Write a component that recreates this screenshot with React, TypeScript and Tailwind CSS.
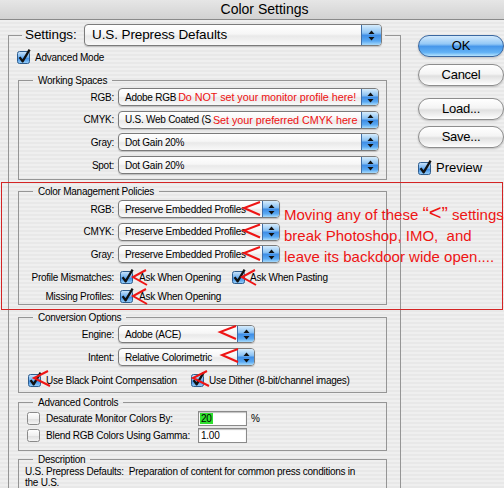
import React from 'react';

type Kids = { children?: React.ReactNode };

function Arrows() {
  return (
    <svg width="7" height="11" viewBox="0 0 7 11">
      <path d="M3.5 0.5 L6.5 4 L0.5 4 Z" fill="#111" />
      <path d="M3.5 10.5 L6.5 7 L0.5 7 Z" fill="#111" />
    </svg>
  );
}

function Popup({
  className,
  text,
  note,
  big,
}: {
  className: string;
  text: string;
  note?: string;
  big?: boolean;
}) {
  return (
    <div
      className={`flex items-stretch rounded-[4px] border border-[#7b7b7b] bg-[linear-gradient(#ffffff,#f6f6f6_45%,#e9e9e9_55%,#f9f9f9)] shadow-[0_1px_1px_rgba(0,0,0,0.18)] ${className}`}
    >
      <div
        className={`flex flex-1 items-center overflow-hidden whitespace-nowrap ${
          big ? 'pl-[7px] text-[13.5px] tracking-[-0.1px]' : 'pl-[6px]'
        }`}
      >
        {text}
        {note && (
          <span className="ml-[2px] text-[10.8px] tracking-[-0.05px] text-[#ee1111]">
            {note}
          </span>
        )}
      </div>
      <div
        className={`flex shrink-0 items-center justify-center rounded-r-[3px] border-l border-[#3f6fa8] bg-[linear-gradient(#d6ecfc,#8cc3f4_40%,#3f8ee6_52%,#5aa9f2_80%,#a8dbfb)] ${
          big ? 'w-[20px]' : 'w-[17px]'
        }`}
      >
        <Arrows />
      </div>
    </div>
  );
}

function Check({ on = true }: { on?: boolean }) {
  return (
    <svg width="13" height="13" viewBox="0 0 13 13" className="shrink-0 overflow-visible">
      <defs>
        <linearGradient id="cbOn" x1="0" y1="0" x2="0" y2="1">
          <stop offset="0" stopColor="#cfe6fb" />
          <stop offset="0.5" stopColor="#6aaef0" />
          <stop offset="0.55" stopColor="#3d8de6" />
          <stop offset="1" stopColor="#9ad2fa" />
        </linearGradient>
        <linearGradient id="cbOff" x1="0" y1="0" x2="0" y2="1">
          <stop offset="0" stopColor="#ffffff" />
          <stop offset="0.5" stopColor="#f0f0f0" />
          <stop offset="0.55" stopColor="#e0e0e0" />
          <stop offset="1" stopColor="#f6f6f6" />
        </linearGradient>
      </defs>
      <rect
        x="0.5"
        y="0.5"
        width="12"
        height="12"
        rx="2"
        fill={on ? 'url(#cbOn)' : 'url(#cbOff)'}
        stroke={on ? '#2f5d8e' : '#8a8a8a'}
      />
      {on && (
        <path
          d="M2.6 6.2 L5.6 10.4 L12.6 -1.4"
          fill="none"
          stroke="#111"
          strokeWidth="2.3"
          strokeLinejoin="round"
        />
      )}
    </svg>
  );
}

function Group({ title, className, children }: Kids & { title: string; className: string }) {
  return (
    <fieldset className={`min-w-0 border border-[#959595] ${className}`}>
      <legend className="ml-[14px] h-[13px] px-[5px] leading-[13px]">{title}</legend>
      {children}
    </fieldset>
  );
}

function Row({ label, children }: Kids & { label: string }) {
  return (
    <div className="flex h-[18px] items-center">
      <span className="w-[95px] text-right">{label}</span>
      <div className="ml-[4px]">{children}</div>
    </div>
  );
}

function CheckRow({ label, className, children }: Kids & { label?: string; className?: string }) {
  return (
    <div className={`flex h-[14px] items-center ${className ?? ''}`}>
      {label !== undefined && <span className="w-[95px] text-right">{label}</span>}
      {children}
    </div>
  );
}

function Button({ label, blue }: { label: string; blue?: boolean }) {
  return (
    <div
      className={`flex h-[22px] w-[86px] items-center justify-center rounded-full border text-[13px] shadow-[0_1px_2px_rgba(0,0,0,0.2)] ${
        blue
          ? 'border-[#3a67a0] bg-[linear-gradient(#d2e9fc,#93c8f6_40%,#4797ea_52%,#63b2f5_82%,#b6e3fd)]'
          : 'border-[#8d8d8d] bg-[linear-gradient(#ffffff,#f4f4f4_45%,#e0e0e0_55%,#f4f4f4_85%,#ffffff)]'
      }`}
    >
      {label}
    </div>
  );
}

const marks: string[] = [
  '260,202 244,208 260,215',
  '260,224.5 244,230.5 260,237.5',
  '260,247 244,253 260,260',
  '146,270 133,277 147,285',
  '146,289 133,296 147,304',
  '255,270 242,277 256,285',
  '236,326 220,332 236,339',
  '238,349 222,355 238,362',
  '48,371 34,378 50,386',
  '207,371 193,378 209,386',
];

export default function App() {
  return (
    <div className="relative h-[488px] w-[504px] overflow-hidden bg-[repeating-linear-gradient(180deg,#efefef_0px,#efefef_2px,#e8e8e8_2px,#e8e8e8_4px)] font-['Liberation_Sans',Arial,sans-serif] text-[10px] tracking-[-0.25px] text-black">
      <div className="flex h-[20px] items-center justify-center border-b border-[#8a8a8a] bg-[linear-gradient(#e6e6e6,#d2d2d2)] pl-[25px] text-[14px] tracking-normal">
        Color Settings
      </div>

      <div className="flex">
        <div className="ml-[8px] w-[409px]">
          <fieldset className="mt-[4px] min-w-0 border border-[#959595] pt-[5px]">
            <legend className="ml-[13px] px-[3px]">
              <div className="flex h-[22px] items-center">
                <span className="w-[59px] text-[13.5px] tracking-[-0.1px]">Settings:</span>
                <Popup big className="h-[22px] w-[298px]" text="U.S. Prepress Defaults" />
              </div>
            </legend>

            <div className="ml-[8px] flex h-[13px] items-center gap-[5px]">
              <Check />
              <span>Advanced Mode</span>
            </div>

            <Group title="Working Spaces" className="mt-[10px] ml-[9px] w-[369px] pt-[1px] pb-[5px]">
              <div className="flex flex-col gap-[4.7px]">
                <Row label="RGB:">
                  <Popup
                    className="h-[18px] w-[261px]"
                    text="Adobe RGB"
                    note="Do NOT set your monitor profile here!"
                  />
                </Row>
                <Row label="CMYK:">
                  <Popup
                    className="h-[18px] w-[261px]"
                    text="U.S. Web Coated (S"
                    note="Set your preferred CMYK here"
                  />
                </Row>
                <Row label="Gray:">
                  <Popup className="h-[18px] w-[261px]" text="Dot Gain 20%" />
                </Row>
                <Row label="Spot:">
                  <Popup className="h-[18px] w-[261px]" text="Dot Gain 20%" />
                </Row>
              </div>
            </Group>

            <Group title="Color Management Policies" className="mt-[5px] ml-[9px] w-[369px] pt-[2px] pb-[1px]">
              <div className="flex flex-col gap-[4.5px]">
                <Row label="RGB:">
                  <Popup className="h-[18px] w-[162px]" text="Preserve Embedded Profiles" />
                </Row>
                <Row label="CMYK:">
                  <Popup className="h-[18px] w-[162px]" text="Preserve Embedded Profiles" />
                </Row>
                <Row label="Gray:">
                  <Popup className="h-[18px] w-[162px]" text="Preserve Embedded Profiles" />
                </Row>
              </div>
              <CheckRow label="Profile Mismatches:" className="mt-[7px]">
                <span className="ml-[6px]">
                  <Check />
                </span>
                <span className="ml-[6px] w-[93px]">Ask When Opening</span>
                <Check />
                <span className="ml-[5px]">Ask When Pasting</span>
              </CheckRow>
              <CheckRow label="Missing Profiles:" className="mt-[5px]">
                <span className="ml-[6px]">
                  <Check />
                </span>
                <span className="ml-[6px]">Ask When Opening</span>
              </CheckRow>
            </Group>

            <Group title="Conversion Options" className="mt-[6px] ml-[9px] w-[369px] pt-[1px] pb-[5px]">
              <div className="flex flex-col gap-[5px]">
                <Row label="Engine:">
                  <Popup className="h-[18px] w-[137px]" text="Adobe (ACE)" />
                </Row>
                <Row label="Intent:">
                  <Popup className="h-[18px] w-[137px]" text="Relative Colorimetric" />
                </Row>
              </div>
              <CheckRow className="mt-[7px] pl-[9px]">
                <Check />
                <span className="ml-[5px] w-[145px]">Use Black Point Compensation</span>
                <Check />
                <span className="ml-[5px]">Use Dither (8-bit/channel images)</span>
              </CheckRow>
            </Group>

            <Group title="Advanced Controls" className="mt-[3px] ml-[9px] w-[369px] pt-[2px] pb-[7px]">
              <div className="flex h-[15px] items-center pl-[8px]">
                <Check on={false} />
                <span className="ml-[6px] w-[152px]">Desaturate Monitor Colors By:</span>
                <div className="flex h-[15px] w-[49px] items-center border border-[#8a8a8a] bg-white pl-[1px] shadow-[inset_0_1px_1px_rgba(0,0,0,0.25)]">
                  <span className="bg-[#2fe12f] px-[1px] leading-[11px]">20</span>
                </div>
                <span className="ml-[4px]">%</span>
              </div>
              <div className="mt-[2px] flex h-[15px] items-center pl-[8px]">
                <Check on={false} />
                <span className="ml-[6px] w-[152px]">Blend RGB Colors Using Gamma:</span>
                <div className="flex h-[15px] w-[49px] items-center border border-[#8a8a8a] bg-white pl-[2px] shadow-[inset_0_1px_1px_rgba(0,0,0,0.25)]">
                  1.00
                </div>
              </div>
            </Group>

            <Group title="Description" className="mt-[2px] ml-[9px] w-[369px] pt-[0px] pb-[30px]">
              <div className="pl-[6px] leading-[12px] whitespace-pre">
                <div>U.S. Prepress Defaults:  Preparation of content for common press conditions in</div>
                <div className="-mt-[1px]">the U.S.</div>
              </div>
            </Group>
          </fieldset>
        </div>

        <div className="ml-[17px] flex flex-col pt-[15px]">
          <Button label="OK" blue />
          <div className="mt-[6.5px]">
            <Button label="Cancel" />
          </div>
          <div className="mt-[12.5px]">
            <Button label="Load..." />
          </div>
          <div className="mt-[6px]">
            <Button label="Save..." />
          </div>
          <div className="mt-[13px] flex h-[14px] items-center gap-[5px] text-[13px] tracking-normal">
            <Check />
            <span>Preview</span>
          </div>
        </div>
      </div>

      <div className="pointer-events-none absolute top-[182px] left-[1px] h-[128px] w-[502px] border border-[#d42424]" />

      <div className="pointer-events-none absolute top-[203px] left-[284px] text-[15px] leading-[21px] tracking-normal whitespace-pre text-[#ee1414]">
        <div>
          Moving any of these <span className="text-[19px]">“</span>
          <span className="text-[22px] leading-[0]">&lt;</span>
          <span className="text-[19px]">”</span> settings
        </div>
        <div>break Photoshop, IMO,  and</div>
        <div>leave its backdoor wide open....</div>
      </div>

      <svg
        className="pointer-events-none absolute top-0 left-0"
        width="504"
        height="488"
        viewBox="0 0 504 488"
      >
        {marks.map((p, i) => (
          <polyline
            key={`mark-${i}`}
            points={p}
            fill="none"
            stroke="#ee1414"
            strokeWidth="2"
            strokeLinejoin="miter"
          />
        ))}
      </svg>
    </div>
  );
}
